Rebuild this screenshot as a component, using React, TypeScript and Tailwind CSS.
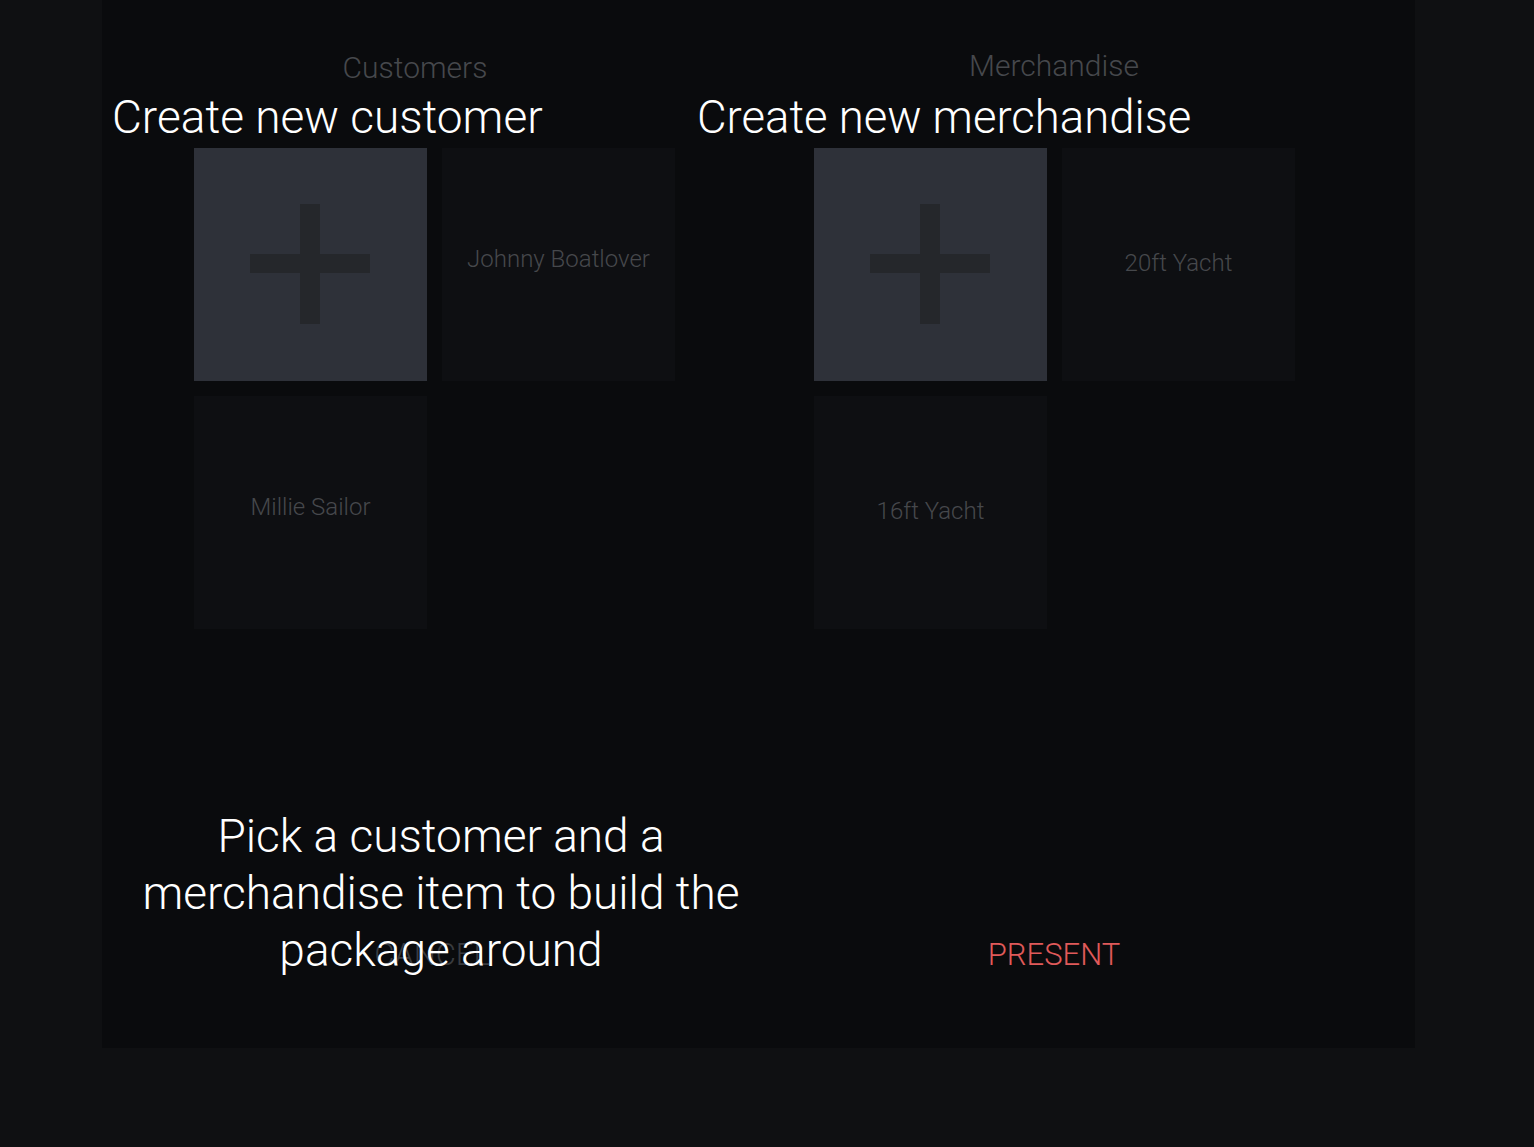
import React from "react";

const font = { fontFamily: "Roboto, 'Noto Sans', sans-serif" };

function PlusTile() {
  return (
    <div className="w-[233px] h-[233px] bg-[#2e3139] flex items-center justify-center">
      <div className="relative w-[120px] h-[120px] -mt-[2px] -ml-[1px]">
        <div className="absolute left-0 top-[50px] w-[120px] h-[19px] bg-[#25272b]" />
        <div className="absolute top-0 left-[50px] w-[20px] h-[120px] bg-[#25272b]" />
      </div>
    </div>
  );
}

function NameTile({ name, up }: { name: string; up: boolean }) {
  return (
    <div
      className={
        up
          ? "w-[233px] h-[233px] bg-[#0e0f12] flex items-center justify-center pb-[12px] text-[24px] font-light text-[#46484c]"
          : "w-[233px] h-[233px] bg-[#0e0f12] flex items-center justify-center pb-[4px] text-[24px] font-light text-[#46484c]"
      }
    >
      {name}
    </div>
  );
}

export default function App() {
  return (
    <div className="w-full h-[1147px] bg-[#0f1012] overflow-hidden" style={font}>
      <div className="relative ml-[102px] w-[1313px] h-[1048px] bg-[#0a0b0d] flex flex-col">
        <div className="flex pt-[44px]">
          <div className="w-[626px] flex flex-col">
            <div className="text-center text-[30px] leading-[48px] font-light text-[#46484c]">Customers</div>
            <div className="mt-[56px] pl-[92px] grid grid-cols-[233px_233px] gap-[15px]">
              <PlusTile />
              <NameTile name="Johnny Boatlover" up />
              <NameTile name="Millie Sailor" up />
            </div>
          </div>
          <div className="w-[652px] flex flex-col">
            <div className="text-center text-[30px] leading-[48px] font-light text-[#46484c] -mt-[2px]">Merchandise</div>
            <div className="mt-[58px] pl-[86px] grid grid-cols-[233px_233px] gap-[15px]">
              <PlusTile />
              <NameTile name="20ft Yacht" up={false} />
              <NameTile name="16ft Yacht" up={false} />
            </div>
          </div>
        </div>
        <div className="mt-auto pb-[69px] flex">
          <div className="w-[660px] text-center text-[31px] leading-[48px] font-light text-[#393b3f]">CANCEL</div>
          <div className="w-[584px] text-center text-[31px] leading-[48px] font-light text-[#e05a5a]">PRESENT</div>
        </div>

        <div className="absolute left-[10px] top-[87px] text-[46px] leading-[60px] font-light text-white whitespace-nowrap">
          Create new customer
        </div>
        <div className="absolute left-[595px] top-[88px] text-[45.5px] leading-[60px] font-light text-white whitespace-nowrap">
          Create new merchandise
        </div>
        <div className="absolute left-[30px] top-[808px] w-[618px] text-center text-[46px] leading-[57px] font-light text-white">
          Pick a customer and a merchandise item to build the package around
        </div>
      </div>
    </div>
  );
}
